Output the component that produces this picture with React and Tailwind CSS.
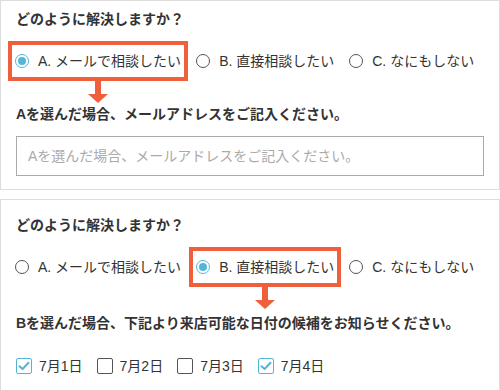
const font = { fontFamily: '"Liberation Sans", "Noto Sans CJK JP", sans-serif' };

const Radio = ({ checked }) =>
  checked ? (
    <span className="flex h-[14px] w-[14px] shrink-0 items-center justify-center rounded-full border-[1.5px] border-[#55b5d6] bg-white">
      <span className="h-[8px] w-[8px] rounded-full bg-[#55b5d6]" />
    </span>
  ) : (
    <span className="h-[14px] w-[14px] shrink-0 rounded-full border-[1.5px] border-[#555]" />
  );

const Arrow = () => (
  <span className="absolute left-1/2 top-[calc(100%+2px)] flex -translate-x-1/2 flex-col items-center">
    <span className="h-[15px] w-[6px] bg-[#ef5f3b]" />
    <span className="h-0 w-0 border-l-[10px] border-r-[10px] border-t-[9px] border-l-transparent border-r-transparent border-t-[#ef5f3b]" />
  </span>
);

const Option = ({ label, checked, boxed }) => (
  <label
    className={
      "relative flex h-[40px] items-center gap-[9px] border-[4px] pl-[3px] pr-[3px] " +
      (boxed ? "border-[#ef5f3b]" : "border-transparent")
    }
  >
    <Radio checked={checked} />
    <span className="text-[14px] leading-[20px] text-[#333]">{label}</span>
    {boxed && <Arrow />}
  </label>
);

const Options = ({ selected }) => (
  <div className="-ml-[8px] mt-[12px] flex gap-[1px]">
    <Option label="A. メールで相談したい" checked={selected === "A"} boxed={selected === "A"} />
    <Option label="B. 直接相談したい" checked={selected === "B"} boxed={selected === "B"} />
    <Option label="C. なにもしない" checked={selected === "C"} boxed={selected === "C"} />
  </div>
);

const Check = ({ checked, label }) => (
  <div className="flex items-center gap-[7px]">
    {checked ? (
      <span className="flex h-[16px] w-[16px] items-center justify-center rounded-[2px] border-[1.5px] border-[#55b5d6]">
        <svg width="12" height="10" viewBox="0 0 12 10" fill="none">
          <path d="M1.5 5.2 L4.6 8 L10.5 1.8" stroke="#55b5d6" strokeWidth="2" strokeLinecap="round" strokeLinejoin="round" />
        </svg>
      </span>
    ) : (
      <span className="h-[16px] w-[16px] rounded-[2px] border-[1.5px] border-[#555]" />
    )}
    <span className="text-[14px] leading-[20px] text-[#333]">{label}</span>
  </div>
);

export default function App() {
  return (
    <div className="h-[390px] w-[500px] overflow-hidden bg-white" style={font}>
      <section className="flex flex-col border border-[#ddd] px-[15px] pb-[13px] pt-[8px]">
        <h2 className="text-[14px] font-bold leading-[20px] text-[#333]">どのように解決しますか？</h2>
        <Options selected="A" />
        <p className="mt-[23px] text-[14px] font-bold leading-[20px] text-[#333]">
          Aを選んだ場合、メールアドレスをご記入ください。
        </p>
        <input
          className="mt-[12px] h-[40px] w-full border border-[#aaa] px-[11px] text-[14px] text-[#333] outline-none placeholder:text-[#aaa]"
          placeholder="Aを選んだ場合、メールアドレスをご記入ください。"
        />
      </section>

      <section className="mt-[9px] flex flex-col border border-[#ddd] px-[15px] pb-[14px] pt-[15px]">
        <h2 className="text-[14px] font-bold leading-[20px] text-[#333]">どのように解決しますか？</h2>
        <Options selected="B" />
        <p className="mt-[26px] text-[14px] font-bold leading-[20px] text-[#333]">
          Bを選んだ場合、下記より来店可能な日付の候補をお知らせください。
        </p>
        <div className="mt-[23px] flex gap-[14px]">
          <Check checked label="7月1日" />
          <Check label="7月2日" />
          <Check label="7月3日" />
          <Check checked label="7月4日" />
        </div>
      </section>
    </div>
  );
}
